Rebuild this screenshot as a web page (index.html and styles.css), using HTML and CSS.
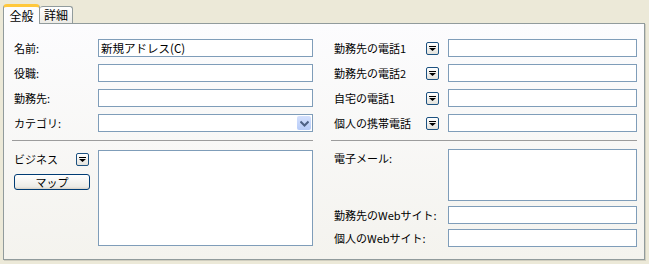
FILE: index.html
```html
<!DOCTYPE html>
<html lang="ja">
<head>
<meta charset="utf-8">
<link rel="stylesheet" href="styles.css">
</head>
<body>
<div class="tabs">
  <div class="tab active">全般</div>
  <div class="tab">詳細</div>
</div>
<div class="panel">
  <div class="cols">
    <div class="grid-left">
      <label class="lbl">名前:</label><div class="field">新規アドレス(C)</div>
      <label class="lbl">役職:</label><div class="field"></div>
      <label class="lbl">勤務先:</label><div class="field"></div>
      <label class="lbl">カテゴリ:</label>
      <div class="field select"><span class="sel-btn"><svg width="9" height="7" viewBox="0 0 9 7"><path d="M0.5 1.5 L4.5 5.5 L8.5 1.5" fill="none" stroke="#4D6185" stroke-width="2"/></svg></span></div>
    </div>
    <div class="grid-right">
      <label class="lbl">勤務先の電話1</label><span class="dd"><svg width="11" height="11" viewBox="0 0 11 11"><path d="M2 3h7v1H2z M2 5h7l-3.5 3z" fill="#000"/></svg></span><div class="field"></div>
      <label class="lbl">勤務先の電話2</label><span class="dd"><svg width="11" height="11" viewBox="0 0 11 11"><path d="M2 3h7v1H2z M2 5h7l-3.5 3z" fill="#000"/></svg></span><div class="field"></div>
      <label class="lbl">自宅の電話1</label><span class="dd"><svg width="11" height="11" viewBox="0 0 11 11"><path d="M2 3h7v1H2z M2 5h7l-3.5 3z" fill="#000"/></svg></span><div class="field"></div>
      <label class="lbl">個人の携帯電話</label><span class="dd"><svg width="11" height="11" viewBox="0 0 11 11"><path d="M2 3h7v1H2z M2 5h7l-3.5 3z" fill="#000"/></svg></span><div class="field"></div>
    </div>
    <div class="sep"></div>
    <div class="sep sep-r"></div>
    <div class="lower-left">
      <div class="addr-side">
        <div class="addr-head"><span class="lbl">ビジネス</span><span class="dd"><svg width="11" height="11" viewBox="0 0 11 11"><path d="M2 3h7v1H2z M2 5h7l-3.5 3z" fill="#000"/></svg></span></div>
        <button class="btn">マップ</button>
      </div>
      <div class="field area-addr"></div>
    </div>
    <div class="lower-right">
      <label class="lbl top">電子メール:</label><div class="field area-mail"></div>
      <label class="lbl">勤務先のWebサイト:</label><div class="field"></div>
      <label class="lbl">個人のWebサイト:</label><div class="field"></div>
    </div>
  </div>
</div>
</body>
</html>
```
FILE: styles.css
```css
html, body {
  margin: 0;
  padding: 0;
  background: #ECE9D8;
  width: 649px;
  height: 264px;
  overflow: hidden;
  font-family: "Noto Sans CJK JP", "Liberation Sans", sans-serif;
  font-size: 11px;
  color: #000;
}
.tabs {
  display: flex;
  align-items: flex-end;
  padding: 3px 0 0 3px;
  height: 20px;
  position: relative;
  z-index: 2;
}
.tab {
  box-sizing: border-box;
  height: 17px;
  width: 33px;
  border: 1px solid #919B9C;
  border-bottom: none;
  border-left: none;
  border-radius: 3px 3px 0 0;
  background: linear-gradient(#FFFFFF, #ECEBE6);
  text-align: center;
  line-height: 16px;
  font-size: 12px;
}
.tab.active {
  height: 20px;
  width: 37px;
  border-left: 1px solid #919B9C;
  border-top: 3px solid #FFC83C;
  border-radius: 4px 4px 0 0;
  background: #FCFCFE;
  line-height: 17px;
  margin-bottom: -1px;
  box-shadow: inset 1px 0 0 #fff;
}
.panel {
  box-sizing: border-box;
  margin-left: 3px;
  width: 642px;
  height: 237px;
  border: 1px solid #919B9C;
  background: linear-gradient(#FCFCFE, #F4F3EE);
  box-shadow: 1px 1px 0 #D0CEBF;
  padding: 15px 7px 0 8px;
}
.cols {
  display: grid;
  grid-template-columns: 301px 306px;
  column-gap: 18px;
}
.grid-left {
  display: grid;
  grid-template-columns: 86px 215px;
  grid-auto-rows: 18px;
  row-gap: 7px;
}
.grid-right {
  display: grid;
  grid-template-columns: 95px 22px 189px;
  grid-auto-rows: 18px;
  row-gap: 7px;
}
.lbl {
  line-height: 18px;
  padding-left: 2px;
  white-space: nowrap;
}
.grid-right .lbl, .lower-right .lbl { padding-left: 3px; }
.lbl.top { align-self: start; }
.field {
  box-sizing: border-box;
  height: 18px;
  border: 1px solid #7F9DB9;
  background: #fff;
  padding-left: 2px;
  line-height: 16px;
  white-space: nowrap;
  font-size: 11.5px;
}
.select {
  display: flex;
  justify-content: flex-end;
  align-items: center;
  padding-right: 1px;
}
.sel-btn {
  width: 14px;
  height: 14px;
  border-radius: 2px;
  background: linear-gradient(#D4E0FD, #B6CBF8);
  display: flex;
  align-items: center;
  justify-content: center;
}
.dd {
  box-sizing: border-box;
  width: 13px;
  height: 13px;
  border: 1px solid #1C5180;
  border-radius: 2px;
  background: linear-gradient(#FFFFFF, #E3E2DC);
  align-self: center;
  display: flex;
  align-items: center;
  justify-content: center;
}
.sep {
  margin-top: 8px;
  height: 0;
  border-top: 1px solid #9C9C9C;
}
.lower-left {
  display: grid;
  grid-template-columns: 86px 215px;
  margin-top: 9px;
}
.addr-side {
  display: flex;
  flex-direction: column;
}
.addr-head {
  display: flex;
  align-items: center;
  justify-content: space-between;
  width: 77px;
  height: 18px;
}
.btn {
  box-sizing: border-box;
  margin: 6px 0 0 2px;
  width: 76px;
  height: 16px;
  padding: 0;
  border: 1px solid #003C74;
  border-radius: 3px;
  background: linear-gradient(#FFFFFF, #ECEBE6 85%, #D6D0C5);
  font-family: inherit;
  font-size: 11px;
  line-height: 13px;
  color: #000;
}
.area-addr { height: 96px; }
.lower-right {
  display: grid;
  grid-template-columns: 117px 189px;
  grid-auto-rows: auto;
  row-gap: 5px;
  margin-top: 8px;
}
.area-mail { height: 52px; }
```
